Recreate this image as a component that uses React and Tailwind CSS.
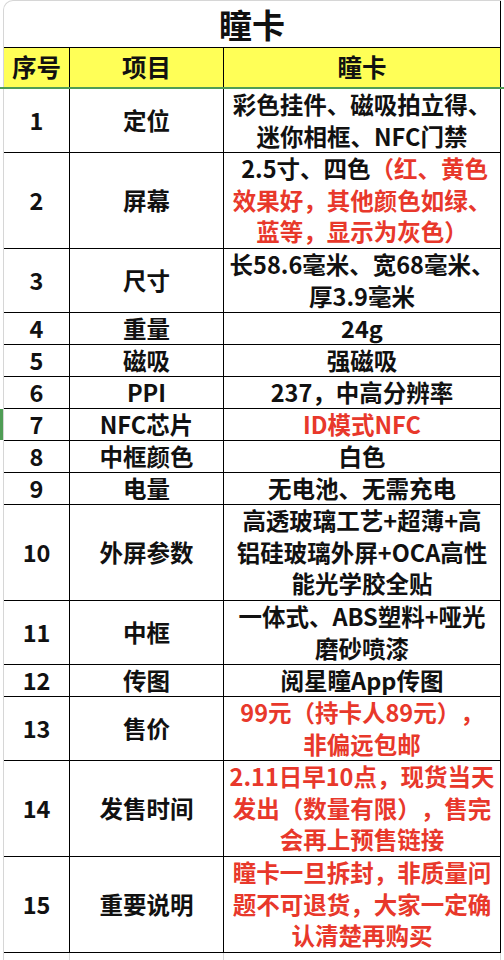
import React from "react";

const R = ({ children }) => <span className="text-[#e8382b]">{children}</span>;

const rows = [
  { n: "1", item: "定位", h: "h-[64px]", c: <>彩色挂件、磁吸拍立得、<br />迷你相框、NFC门禁</> },
  {
    n: "2",
    item: "屏幕",
    h: "h-[96px]",
    c: (
      <>
        <span>&nbsp;2.5寸、四色</span>
        <R>（红、黄色</R>
        <br />
        <R>效果好，其他颜色如绿、</R>
        <br />
        <R>蓝等，显示为灰色）</R>
      </>
    ),
  },
  { n: "3", item: "尺寸", h: "h-[64px]", c: <>长58.6毫米、宽68毫米、<br />厚3.9毫米</> },
  { n: "4", item: "重量", h: "h-[32px]", c: <>24g</> },
  { n: "5", item: "磁吸", h: "h-[32px]", c: <>强磁吸</> },
  { n: "6", item: "PPI", h: "h-[32px]", c: <>237，中高分辨率</> },
  { n: "7", item: "NFC芯片", h: "h-[32px]", c: <R>ID模式NFC</R>, mark: true },
  { n: "8", item: "中框颜色", h: "h-[32px]", c: <>白色</> },
  { n: "9", item: "电量", h: "h-[32px]", c: <>无电池、无需充电</> },
  {
    n: "10",
    item: "外屏参数",
    h: "h-[96px]",
    c: <>高透玻璃工艺+超薄+高<br />铝硅玻璃外屏+OCA高性<br />能光学胶全贴</>,
  },
  { n: "11", item: "中框", h: "h-[64px]", c: <>一体式、ABS塑料+哑光<br />磨砂喷漆</> },
  { n: "12", item: "传图", h: "h-[32px]", c: <>阅星瞳App传图</> },
  { n: "13", item: "售价", h: "h-[64px]", c: <R>99元（持卡人89元），<br />非偏远包邮</R> },
  {
    n: "14",
    item: "发售时间",
    h: "h-[96px]",
    c: <R>2.11日早10点，现货当天<br />发出（数量有限），售完<br />会再上预售链接</R>,
  },
  {
    n: "15",
    item: "重要说明",
    h: "h-[96px]",
    c: <R>瞳卡一旦拆封，非质量问<br />题不可退货，大家一定确<br />认清楚再购买</R>,
  },
];

export default function App() {
  return (
    <div className="w-[504px] h-[960px] bg-white overflow-hidden font-['Noto_Sans_CJK_SC',sans-serif] font-bold text-[#111] [text-spacing-trim:space-all]">
      <div className="ml-[3px] w-[498px] border-l border-t border-[#d6d6d6] rounded-tl-[10px] h-[961px]">
        <div className="h-[46px] border-r border-black flex items-center justify-center text-[33px] leading-none">
          瞳卡
        </div>
        <div className="relative grid grid-cols-[66px_154px_277px] h-[42px] border-t border-black bg-[#ffff57] text-[24.5px]">
          <div className="border-r border-black flex items-center justify-center pb-[2px]">序号</div>
          <div className="border-r border-black flex items-center justify-center pb-[2px]">项目</div>
          <div className="border-r border-black flex items-center justify-center pb-[2px]">瞳卡</div>
          <span className="absolute left-[-4px] right-[-4px] bottom-0 h-[2px] bg-[#4f9d55]" />
        </div>
        {rows.map((r) => (
          <div
            key={r.n}
            className={`relative grid grid-cols-[66px_154px_277px] border-b border-black text-[23.5px] leading-[31.5px] ${r.h}`}
          >
            <div className="border-r border-black flex items-center justify-center">{r.n}</div>
            <div className="border-r border-black flex items-center justify-center">{r.item}</div>
            <div className="border-r border-black flex items-center justify-center text-center whitespace-nowrap">
              <div>{r.c}</div>
            </div>
            {r.mark && <span className="absolute left-[-4px] top-0 bottom-0 w-[3px] bg-[#4f9d55]" />}
          </div>
        ))}
        <div className="grid grid-cols-[66px_154px_277px] h-[20px]">
          <div className="border-r border-[#d6d6d6]" />
          <div className="border-r border-[#d6d6d6]" />
          <div className="border-r border-[#d6d6d6]" />
        </div>
      </div>
    </div>
  );
}
